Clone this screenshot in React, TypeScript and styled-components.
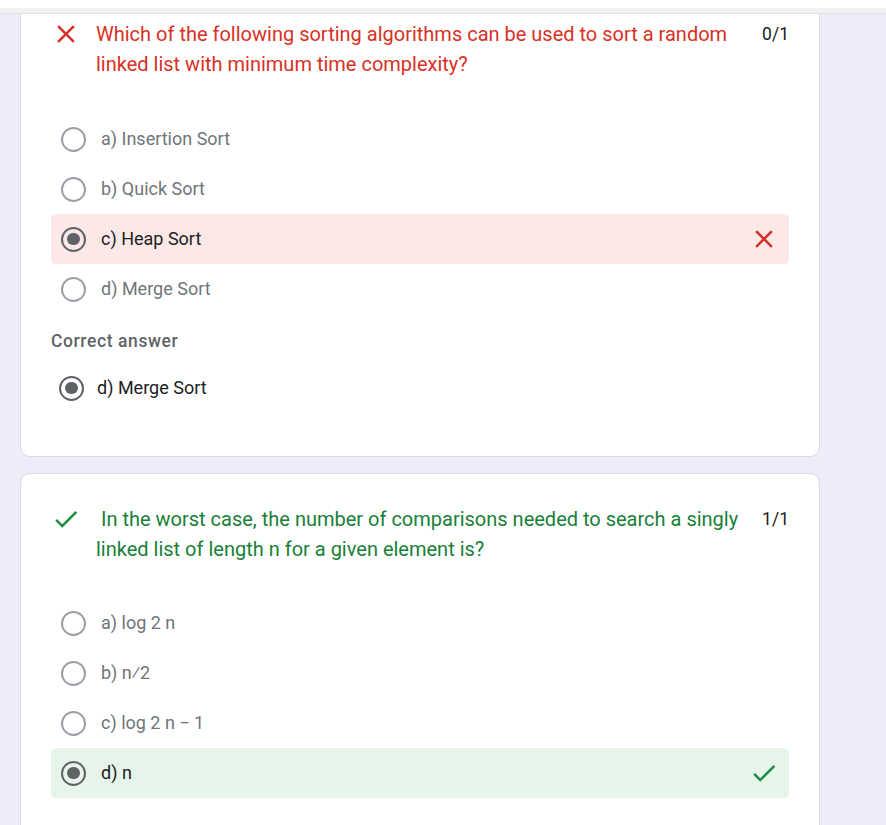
import React from 'react';
import styled, { createGlobalStyle } from 'styled-components';

const GlobalStyle = createGlobalStyle`
  html, body {
    margin: 0;
    padding: 0;
    background: #f0ebf8;
  }
  body {
    font-family: Roboto, "Noto Sans", Arial, sans-serif;
  }
`;

const Page = styled.div`
  min-height: 825px;
  overflow: hidden;
  background: #f0ebf8;
`;

const TopBar = styled.div`
  position: sticky;
  top: 0;
  z-index: 2;
  height: 8px;
  background: #fff;
  border-bottom: 5px solid #f1f1f1;
  box-shadow: 0 1px 0 #e2e2e2;
`;

const Main = styled.main`
  display: flex;
  flex-direction: column;
  gap: 16px;
  width: 800px;
  margin: -25px 0 0 20px;
`;

const Card = styled.section`
  background: #fff;
  border: 1px solid #dadce0;
  border-radius: 10px;
  padding: 30px 30px 43px;
`;

const QuestionRow = styled.div`
  display: flex;
  align-items: flex-start;
`;

const StatusIcon = styled.span`
  flex: none;
  width: 30px;
  height: 30px;
  display: flex;
  align-items: center;
  justify-content: center;
`;

const QuestionText = styled.div<{ $correct?: boolean }>`
  flex: 1;
  margin-left: 15px;
  font-size: 20px;
  line-height: 30px;
  color: ${({ $correct }) => ($correct ? '#188038' : '#d93025')};
`;

const Score = styled.div`
  flex: none;
  margin-left: 18px;
  font-size: 17.5px;
  line-height: 30px;
  color: #202124;
`;

const Options = styled.div<{ $offset: number }>`
  display: flex;
  flex-direction: column;
  margin-top: ${({ $offset }) => $offset}px;
`;

const OptionRow = styled.div<{ $state?: 'wrong' | 'right' }>`
  display: flex;
  align-items: center;
  height: 50px;
  padding: 0 10px;
  border-radius: 5px;
  background: ${({ $state }) =>
    $state === 'wrong' ? '#fce8e6' : $state === 'right' ? '#e6f4ea' : 'transparent'};
`;

const Radio = styled.span<{ $checked?: boolean }>`
  flex: none;
  box-sizing: border-box;
  width: 25px;
  height: 25px;
  border-radius: 50%;
  border: 2.5px solid ${({ $checked }) => ($checked ? '#5f6368' : '#9aa0a6')};
  display: flex;
  align-items: center;
  justify-content: center;

  &::after {
    content: '';
    display: ${({ $checked }) => ($checked ? 'block' : 'none')};
    width: 12.5px;
    height: 12.5px;
    border-radius: 50%;
    background: #5f6368;
  }
`;

const OptionText = styled.span<{ $checked?: boolean }>`
  flex: 1;
  margin-left: 15px;
  font-size: 18px;
  line-height: 24px;
  color: ${({ $checked }) => ($checked ? '#202124' : '#70757a')};
`;

const CorrectLabel = styled.div`
  margin-top: 15px;
  font-size: 17.5px;
  font-weight: 500;
  line-height: 24px;
  letter-spacing: 0.6px;
  color: #5f6368;
`;

const CorrectRow = styled.div`
  display: flex;
  align-items: center;
  height: 50px;
  margin-top: 10px;
  padding-left: 8px;

  ${OptionText} {
    margin-left: 13px;
  }
`;

const CrossIcon = ({ size = 30 }: { size?: number }) => (
  <svg width={size} height={size} viewBox="0 0 24 24" fill="#d93025">
    <path d="M19 6.41L17.59 5 12 10.59 6.41 5 5 6.41 10.59 12 5 17.59 6.41 19 12 13.41 17.59 19 19 17.59 13.41 12z" />
  </svg>
);

const CheckIcon = ({ size = 30 }: { size?: number }) => (
  <svg width={size} height={size} viewBox="0 0 24 24" fill="#1e8e3e">
    <path d="M9 16.17L4.83 12l-1.42 1.41L9 19 21 7l-1.41-1.41z" />
  </svg>
);

type Option = { label: string; state?: 'wrong' | 'right' };

const OptionList = ({ options, offset = 35 }: { options: Option[]; offset?: number }) => (
  <Options $offset={offset}>
    {options.map((o) => (
      <OptionRow key={o.label} $state={o.state}>
        <Radio $checked={!!o.state} />
        <OptionText $checked={!!o.state}>{o.label}</OptionText>
        {o.state === 'wrong' && (
          <StatusIcon>
            <CrossIcon />
          </StatusIcon>
        )}
        {o.state === 'right' && (
          <StatusIcon>
            <CheckIcon />
          </StatusIcon>
        )}
      </OptionRow>
    ))}
  </Options>
);

export default function App() {
  return (
    <Page>
      <GlobalStyle />
      <TopBar />
      <Main>
        <Card>
          <QuestionRow>
            <StatusIcon>
              <CrossIcon />
            </StatusIcon>
            <QuestionText>
              Which of the following sorting algorithms can be used to sort a random linked list
              with minimum time complexity?
            </QuestionText>
            <Score>0/1</Score>
          </QuestionRow>
          <OptionList
            options={[
              { label: 'a) Insertion Sort' },
              { label: 'b) Quick Sort' },
              { label: 'c) Heap Sort', state: 'wrong' },
              { label: 'd) Merge Sort' },
            ]}
          />
          <CorrectLabel>Correct answer</CorrectLabel>
          <CorrectRow>
            <Radio $checked />
            <OptionText $checked>d) Merge Sort</OptionText>
          </CorrectRow>
        </Card>

        <Card>
          <QuestionRow>
            <StatusIcon>
              <CheckIcon />
            </StatusIcon>
            <QuestionText $correct>
              {'\u00a0'}In the worst case, the number of comparisons needed to search a singly
              linked list of length n for a given element is?
            </QuestionText>
            <Score>1/1</Score>
          </QuestionRow>
          <OptionList
            offset={34}
            options={[
              { label: 'a) log 2 n' },
              { label: 'b) n\u20442' },
              { label: 'c) log 2 n \u2212 1' },
              { label: 'd) n', state: 'right' },
            ]}
          />
        </Card>
      </Main>
    </Page>
  );
}
